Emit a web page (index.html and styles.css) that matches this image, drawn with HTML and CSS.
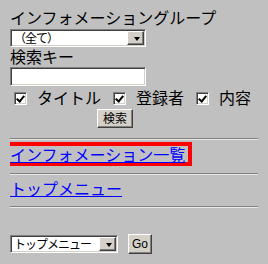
FILE: index.html
```html
<!DOCTYPE html>
<html lang="ja">
<head>
  <meta charset="UTF-8">
  <title>インフォメーション一覧</title>
  <link rel="stylesheet" href="styles.css">
</head>
<body>
  <form class="search">
    <div class="label">インフォメーショングループ</div>
    <span class="dropdown group"><select><option>（全て）</option></select></span>
    <div class="label key-label">検索キー</div>
    <input type="text" class="key">
    <div class="checks">
      <label class="check first"><input type="checkbox" checked><span>タイトル</span></label>
      <label class="check"><input type="checkbox" checked><span>登録者</span></label>
      <label class="check"><input type="checkbox" checked><span>内容</span></label>
    </div>
    <div class="submit"><button type="button" class="btn">検索</button></div>
  </form>
  <hr class="rule first-rule">
  <div class="nav current-row"><a href="#" class="current">インフォメーション一覧</a></div>
  <hr class="rule mid-rule">
  <div class="nav top-row"><a href="#">トップメニュー</a></div>
  <hr class="rule last-rule">
  <div class="jump">
    <span class="dropdown menu"><select><option>トップメニュー</option></select></span>
    <button type="button" class="btn go">Go</button>
  </div>
</body>
</html>
```

FILE: styles.css
```css
* { box-sizing: border-box; }
body {
  margin: 8px 10px;
  background: #c0c0c0;
  color: #000;
  font-family: "Noto Sans CJK JP", sans-serif;
  font-size: 16px;
  line-height: 18px;
}
.search { margin: 0; }
.label { height: 18px; white-space: nowrap; }

/* classic sunken fields */
.dropdown {
  position: relative;
  display: block;
  height: 18px;
}
.dropdown select,
.key {
  appearance: none;
  display: block;
  width: 100%;
  margin: 0;
  background: #fff;
  color: #000;
  border: 1px solid;
  border-color: #808080 #fff #fff #808080;
  box-shadow: inset 1px 1px #404040, inset -1px -1px #d4d0c8;
  border-radius: 0;
  outline: none;
}
.dropdown select {
  height: 18px;
  padding: 0 0 0 3px;
  font-family: "Noto Sans CJK JP", sans-serif;
  font-size: 12px;
  line-height: 14px;
  letter-spacing: -1px;
}
.dropdown::before {
  content: "";
  position: absolute;
  top: 2px;
  right: 2px;
  bottom: 2px;
  width: 15px;
  background: #d4d0c8;
  border: 1px solid;
  border-color: #fff #404040 #404040 #fff;
  box-shadow: inset -1px -1px #808080;
  pointer-events: none;
}
.dropdown::after {
  content: "";
  position: absolute;
  top: 8px;
  right: 6px;
  border-style: solid;
  border-width: 4px 3.5px 0;
  border-color: #000 transparent transparent;
  pointer-events: none;
}
.group { width: 136px; margin-top: 3px; }
.key { height: 19px; width: 136px; margin-top: 2px; padding: 0 3px; }

.checks {
  display: flex;
  height: 18px;
  margin-top: 2px;
}
.check {
  display: flex;
  align-items: flex-start;
  gap: 10px;
  margin-left: 12px;
}
.check.first { margin-left: 4px; }
.check input {
  appearance: none;
  position: relative;
  width: 13px;
  height: 13px;
  margin: 4px 0 0;
  background: #fff;
  border: 1px solid;
  border-color: #808080 #fff #fff #808080;
  box-shadow: inset 1px 1px #404040, inset -1px -1px #d4d0c8;
}
.check input:checked::after {
  content: "";
  position: absolute;
  left: 3px;
  top: 1px;
  width: 3px;
  height: 6px;
  border: solid #000;
  border-width: 0 2px 2px 0;
  transform: rotate(40deg);
}

.btn {
  background: #d4d0c8;
  color: #000;
  border: 1px solid;
  border-color: #fff #404040 #404040 #fff;
  box-shadow: inset -1px -1px #808080;
  border-radius: 0;
  font-family: "Noto Sans CJK JP", sans-serif;
  font-size: 12px;
  line-height: 14px;
  padding: 0;
  margin: 0;
}
.submit { margin-top: 1px; padding-left: 87px; }
.submit .btn { width: 36px; height: 19px; }

.rule {
  height: 0;
  border: 0;
  border-top: 1px solid #808080;
  border-bottom: 1px solid #e8e8e8;
  margin: 0;
}
.first-rule { margin-top: 10px; }
.mid-rule { margin-top: 7px; }
.last-rule { margin-top: 9px; }

.nav a { color: #00f; text-decoration: underline; white-space: nowrap; }
.current-row { margin-top: 2px; height: 24px; }
.current {
  display: inline-block;
  margin-left: -6px;
  border: 4px solid #f00;
  padding: 0 3px 0 2px;
  line-height: 16px;
  vertical-align: top;
}
.top-row { margin-top: 4px; height: 18px; }

.jump {
  display: flex;
  align-items: flex-start;
  margin-top: 26px;
}
.menu { width: 108px; margin-top: 1px; }
.go {
  width: 24px;
  height: 20px;
  margin-left: 10px;
  font-family: "Liberation Sans", sans-serif;
}
```
